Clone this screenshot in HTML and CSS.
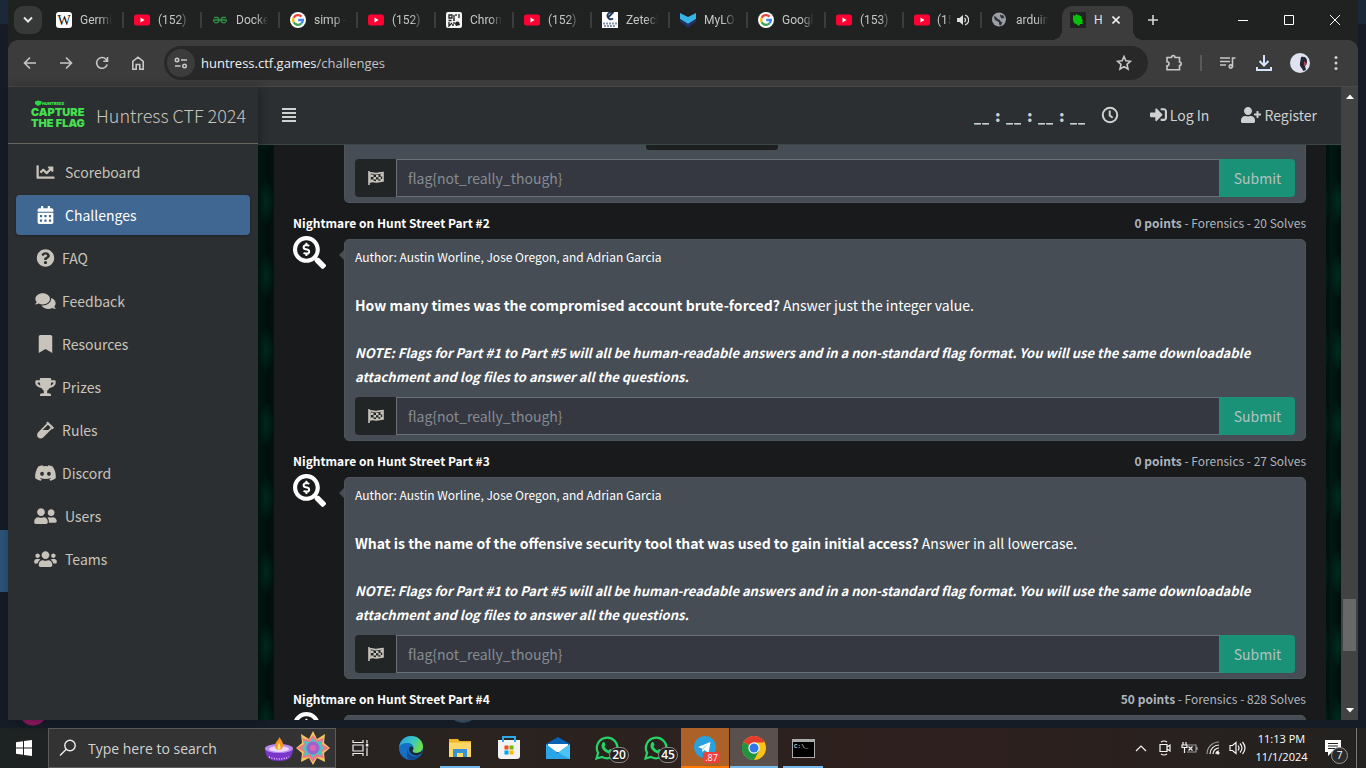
FILE: index.html
```html
<!DOCTYPE html>
<html lang="en">
<head>
<meta charset="utf-8">
<title>Huntress CTF 2024</title>
<link rel="stylesheet" href="styles.css">
</head>
<body>
<svg class="sprite" aria-hidden="true">
  <symbol id="youtube" viewBox="0 0 16 16"><rect y="2.500" width="16" height="11" rx="2.500" fill="#ff0033"/><path d="M6.500 5.600v4.800L10.500 8z" fill="#fff"/></symbol>
  <symbol id="google" viewBox="0 0 16 16"><circle cx="8" cy="8" r="8" fill="#fff"/><g fill="none" stroke-width="2.300"><path d="M11.500 4.600A4.900 4.900 0 0 0 3.700 5.700" stroke="#ea4335"/><path d="M3.700 5.700a4.900 4.900 0 0 0 0 4.600" stroke="#fbbc05"/><path d="M3.700 10.300a4.900 4.900 0 0 0 7.600 1.200" stroke="#34a853"/><path d="M11.300 11.500A4.900 4.900 0 0 0 12.900 8H8.200" stroke="#4285f4"/></g></symbol>
  <symbol id="flag" viewBox="0 0 16 14"><path d="M1 0v14M2 2c3-1 4 1 7 0.600 2.500-.4 3.500-1 6-1v8.400c-3 0-4 1.200-6.500 1-2.500-.2-3.500-1-6.500 0z" fill="none" stroke="currentColor" stroke-width="1.600"/><path d="M3 3.500h2.500V6H3zM8 4h2.500v2.200H8zM12.500 3H15v2.500h-2.500zM5.500 6H8v2.400H5.500zM10.500 6h2.300v2.200h-2.300zM3 8.400h2.500v2H3zM8 8.400h2.500v2.400H8zM12.500 8H15v2h-2.500z" fill="currentColor"/></symbol>
  <symbol id="whatsapp" viewBox="0 0 24 24"><path d="M1.500 22.500l1.600-5.600A10.300 10.300 0 1 1 7 20.900z" fill="none" stroke="#25d366" stroke-width="2.200"/><path d="M8 6.300c.5-.5 1.300-.4 1.600.3l.8 1.900c.2.500 0 .9-.9 1.900 1 2 2.300 3.200 4.300 4 .9-1.300 1.300-1.500 1.800-1.200l2 1c.5.300.4 1.200-.1 2-1 1.400-2.700 1.700-5 .8C9 15.600 7.300 13.200 6.600 11 6.200 9 6.900 7.200 8 6.300z" fill="#25d366"/></symbol>
  <symbol id="search-dollar" viewBox="0 0 512 512"><path fill="currentColor" d="M505.040 442.660l-99.710-99.690c-4.500-4.500-10.600-7-17-7h-16.300c27.600-35.300 44-79.690 44-127.990C416.030 93.090 322.920 0 208.020 0S0 93.090 0 207.980s93.110 207.980 208.020 207.980c48.300 0 92.710-16.400 128.010-44v16.300c0 6.400 2.500 12.500 7 17l99.710 99.690c9.400 9.400 24.600 9.400 33.900 0l28.300-28.300c9.400-9.400 9.400-24.590.1-33.990zm-297.020-90.700c-79.540 0-144-64.340-144-143.980 0-79.530 64.350-143.980 144-143.980 79.540 0 144 64.340 144 143.980 0 79.530-64.350 143.980-144 143.980zm27.110-152.540l-45.010-13.500c-5.160-1.550-8.770-6.780-8.770-12.730 0-7.270 5.300-13.190 11.800-13.190h28.100c4.560 0 8.960 1.290 12.820 3.720 3.240 2.030 7.360 1.910 10.130-.73l11.750-11.210c3.530-3.370 3.330-9.210-.57-12.140-9.100-6.830-20.080-10.770-31.370-11.350V112c0-4.420-3.580-8-8-8h-16c-4.420 0-8 3.580-8 8v16.120c-23.630.63-42.680 20.550-42.680 45.070 0 19.970 12.990 37.810 31.580 43.390l45.010 13.500c5.160 1.550 8.770 6.780 8.770 12.730 0 7.270-5.300 13.190-11.800 13.190h-28.100c-4.560 0-8.960-1.290-12.820-3.720-3.240-2.030-7.360-1.910-10.130.73l-11.750 11.210c-3.530 3.370-3.330 9.210.57 12.140 9.100 6.830 20.080 10.770 31.370 11.350V304c0 4.420 3.580 8 8 8h16c4.420 0 8-3.580 8-8v-16.120c23.630-.63 42.680-20.540 42.680-45.070 0-19.970-12.990-37.810-31.590-43.390z"/></symbol>
</svg>

<div class="desktop">
<div class="window">
  <header class="tabstrip">
    <button class="tab-search" aria-label="Search tabs"><svg width="12" height="8" viewBox="0 0 12 8"><path d="M2 1.500l4 4 4-4" fill="none" stroke="#e3e3e3" stroke-width="2"/></svg></button>
    <nav class="tabs" aria-label="Tabs">
      <a class="tab" href="#"><svg class="fav" viewBox="0 0 16 16"><rect width="16" height="16" rx="3" fill="#fff"/><text x="8" y="13" text-anchor="middle" font-family="Liberation Serif, serif" font-size="14" fill="#111">W</text></svg><span>Germi</span></a>
      <a class="tab" href="#"><svg class="fav"><use href="#youtube"/></svg><span>(152) I</span></a>
      <a class="tab" href="#"><svg class="fav" viewBox="0 0 16 16"><path d="M1 8h14M2 5.500h3.500a2.800 2.800 0 1 1-4 3M14 5.500h-3.500a2.800 2.800 0 1 0 4 3" fill="none" stroke="#2f8d46" stroke-width="1.400"/></svg><span>Docke</span></a>
      <a class="tab" href="#"><svg class="fav"><use href="#google"/></svg><span>simp -</span></a>
      <a class="tab" href="#"><svg class="fav"><use href="#youtube"/></svg><span>(152) I</span></a>
      <a class="tab" href="#"><svg class="fav" viewBox="0 0 16 16"><rect width="16" height="16" rx="2" fill="#f4f4f4"/><path d="M3 3h3v3H3zM10 2v2M13 2v4M8 3v4M2.500 8.500h3M7 8h2M3 10v4l3-3M6 13h2M8 10v2" fill="none" stroke="#222" stroke-width="1.300"/><path d="M9 12a2.500 2.500 0 0 1 4-2l1 3-4 1z" fill="#222"/></svg><span>Chrom</span></a>
      <a class="tab" href="#"><svg class="fav"><use href="#youtube"/></svg><span>(152) T</span></a>
      <a class="tab" href="#"><svg class="fav" viewBox="0 0 16 16"><path d="M0 0h16v16H0z" fill="#fff"/><path d="M11 1a3.400 3.400 0 1 0 0 5.500M6 5.500L11.500 0" fill="none" stroke="#1d3557" stroke-width="1.800"/><path d="M1 11.500h14M2 14h12" stroke="#8295ad" stroke-width="1.800" stroke-dasharray="2 1"/></svg><span>Zetech</span></a>
      <a class="tab" href="#"><svg class="fav" viewBox="0 0 16 16"><path d="M0 1l8 4 8-4v6l-8 5-8-5z" fill="#36b5e6"/><path d="M0 7l8 5 8-5v2.500L8 15.500 0 9.500z" fill="#20336b"/></svg><span>MyLO</span></a>
      <a class="tab" href="#"><svg class="fav"><use href="#google"/></svg><span>Googl</span></a>
      <a class="tab" href="#"><svg class="fav"><use href="#youtube"/></svg><span>(153) C</span></a>
      <a class="tab audible" href="#"><svg class="fav"><use href="#youtube"/></svg><span>(15</span><svg class="audio" viewBox="0 0 12 12"><path d="M0 4h2.500L6 1v10L2.500 8H0z" fill="#ddd"/><path d="M7.500 4a2.500 2.500 0 0 1 0 4M8 1.200a5 5 0 0 1 0 9.600" fill="none" stroke="#ddd" stroke-width="1.300"/></svg></a>
      <a class="tab last" href="#"><svg class="fav" viewBox="0 0 16 16"><circle cx="7" cy="7.500" r="7" fill="#9aa0a6"/><path d="M2 4c2 0 3 3 5 3.500s1 3 3.500 2.500L9 13.500c-3 0-1-3-3-4S2 8 2 4zM8 1.500c0 2 2 2 3 1.500l1.500 3-3 .5L8 4" fill="#303336"/></svg><span>arduin</span></a>
      <a class="tab active" href="#" aria-current="page"><svg class="fav" viewBox="0 0 16 16"><path d="M0 0h16v16H0z" fill="#222"/><path d="M3 3l2 1 1-2 2 1 3 1 1 3 1 2-1 1 1 2-3 0-1 2-3-2-2-1-1-3z" fill="#04c30a"/></svg><span>H</span><svg class="tab-close" viewBox="0 0 8 8"><path d="M0.500.5l7 7M7.500.5l-7 7" stroke="#eee" stroke-width="1.600"/></svg></a>
    </nav>
    <button class="tool new-tab" aria-label="New tab"><svg width="10" height="10"><path d="M5 0v10M0 5h10" stroke="#d5d7d6" stroke-width="1.600"/></svg></button>
    <div class="window-buttons">
      <button aria-label="Minimize"><svg width="10" height="10"><path d="M0 5.500h10" stroke="#fff"/></svg></button>
      <button aria-label="Maximize"><svg width="10" height="10"><path d="M.5.5h9v9h-9z" stroke="#fff" fill="none"/></svg></button>
      <button aria-label="Close"><svg width="10" height="10"><path d="M0 0l10 10M10 0L0 10" stroke="#fff"/></svg></button>
    </div>
  </header>

  <div class="toolbar">
    <button class="tool" aria-label="Back"><svg width="14" height="14"><path d="M13 7H2M7 1.500L1.500 7 7 12.500"/></svg></button>
    <button class="tool" aria-label="Forward"><svg width="14" height="14"><path d="M1 7h11M7 1.500L12.500 7 7 12.500"/></svg></button>
    <button class="tool" aria-label="Reload"><svg width="14" height="14"><path d="M12.200 8.500A5.400 5.400 0 1 1 11 3.200L12.500 5M12.500 1v4.300H8.300"/></svg></button>
    <button class="tool" aria-label="Home"><svg width="14" height="14"><path d="M1.800 13.200V5.500L7 1.200l5.200 4.300v7.700H8.800V8.500H5.200v4.700z"/></svg></button>
    <div class="omnibox">
      <button class="site-info" aria-label="Site information"><svg width="14" height="14"><path d="M7 4h6M1 10h5.500"/><circle cx="3" cy="4" r="1.700"/><circle cx="10.500" cy="10" r="1.700"/></svg></button>
      <a class="url" href="#">huntress.ctf.games<span>/challenges</span></a>
      <button class="tool star" aria-label="Bookmark"><svg width="16" height="16"><path d="M8 1.500l1.900 4.300 4.600.5-3.500 3.100 1 4.600L8 11.600 4 14l1-4.600L1.500 6.300l4.600-.5z"/></svg></button>
    </div>
    <button class="tool" aria-label="Extensions"><svg width="18" height="18"><path d="M2 3.500h4.500c0-2.500 3.500-2.500 3.500 0h4.500V8c2.300 0 2.300 3.500 0 3.500v4.200H2v-4c2.700 0 2.700-4 0-4z"/></svg></button>
    <span class="divider"></span>
    <button class="tool" aria-label="Media"><svg width="16" height="14"><path d="M0 2h10M0 5.500h10M0 9h6M12.500 11V2h3"/><circle cx="10.800" cy="10.500" r="1.600"/></svg></button>
    <button class="tool download" aria-label="Downloads"><svg width="18" height="18"><path d="M9 1v10M4.500 7L9 11.500 13.500 7M2 13v3h14v-3" stroke-width="2"/></svg></button>
    <button class="tool" aria-label="Profile"><svg width="20" height="20"><circle cx="10" cy="10" r="10" fill="#dfe3f0" stroke="none"/><path d="M11 4c4-1 6 1 6 4 0 3-1 4-2 5l1 4-3 1c0-3-4-4-3-8z" fill="#252733" stroke="none"/><path d="M14 8l3 3-3 2z" fill="#b34050" stroke="none"/></svg></button>
    <button class="tool" aria-label="Menu"><svg width="4" height="14"><g fill="#d0d0d0" stroke="none"><circle cx="2" cy="1.600" r="1.500"/><circle cx="2" cy="7" r="1.500"/><circle cx="2" cy="12.400" r="1.500"/></g></svg></button>
  </div>

  <div class="page">
    <aside class="sidebar">
      <a class="brand" href="#">
        <svg class="logo" width="58" height="32" viewBox="0 0 58 32" aria-hidden="true"><path d="M5 2.500l3-1 4 1-1 3-3 1.500-3-2z" fill="#27d845"/><g fill="#43e04f" font-family="Inter, sans-serif" font-weight="900"><text x="12" y="6" font-size="4">HUNTRESS</text><text x="1" y="17" font-size="11">CAPTURE</text><text x="1" y="28" font-size="11">THE FLAG</text></g></svg>
        <span>Huntress CTF 2024</span>
      </a>
      <nav class="menu" aria-label="Main">
        <a href="#"><svg viewBox="0 0 512 512"><path d="M496 384H64V80c0-8.840-7.160-16-16-16H16C7.160 64 0 71.160 0 80v336c0 17.670 14.330 32 32 32h464c8.840 0 16-7.160 16-16v-32c0-8.840-7.160-16-16-16zM464 96H345.940c-21.380 0-32.090 25.850-16.970 40.970l32.400 32.400L288 242.750l-73.370-73.370c-12.500-12.500-32.760-12.500-45.250 0l-68.690 68.690c-6.250 6.250-6.250 16.380 0 22.630l22.620 22.620c6.250 6.250 16.380 6.250 22.630 0L192 237.250l73.370 73.370c12.500 12.500 32.760 12.500 45.250 0l96-96 32.400 32.400c15.120 15.120 40.970 4.410 40.970-16.970V112c.01-8.840-7.150-16-15.990-16z"/></svg><span class="wide">Scoreboard</span></a>
        <a href="#" class="current" aria-current="page"><svg viewBox="0 0 448 512"><path d="M0 464c0 26.500 21.500 48 48 48h352c26.500 0 48-21.500 48-48V192H0v272zm320-196c0-6.600 5.400-12 12-12h40c6.600 0 12 5.400 12 12v40c0 6.600-5.400 12-12 12h-40c-6.600 0-12-5.400-12-12v-40zm0 128c0-6.600 5.400-12 12-12h40c6.600 0 12 5.400 12 12v40c0 6.600-5.400 12-12 12h-40c-6.600 0-12-5.400-12-12v-40zM192 268c0-6.600 5.400-12 12-12h40c6.600 0 12 5.400 12 12v40c0 6.600-5.400 12-12 12h-40c-6.600 0-12-5.400-12-12v-40zm0 128c0-6.600 5.400-12 12-12h40c6.600 0 12 5.400 12 12v40c0 6.600-5.400 12-12 12h-40c-6.600 0-12-5.400-12-12v-40zM64 268c0-6.600 5.400-12 12-12h40c6.600 0 12 5.400 12 12v40c0 6.600-5.400 12-12 12H76c-6.600 0-12-5.400-12-12v-40zm0 128c0-6.600 5.400-12 12-12h40c6.600 0 12 5.400 12 12v40c0 6.600-5.400 12-12 12H76c-6.600 0-12-5.400-12-12v-40zM400 64h-48V16c0-8.800-7.200-16-16-16h-32c-8.800 0-16 7.200-16 16v48H160V16c0-8.800-7.200-16-16-16h-32c-8.800 0-16 7.200-16 16v48H48C21.500 64 0 85.500 0 112v48h448v-48c0-26.500-21.500-48-48-48z"/></svg><span class="wide">Challenges</span></a>
        <a href="#"><svg viewBox="0 0 512 512"><path d="M504 256c0 136.997-111.043 248-248 248S8 392.997 8 256C8 119.083 119.043 8 256 8s248 111.083 248 248zM262.655 90c-54.497 0-89.255 22.957-116.549 63.758-3.536 5.286-2.353 12.415 2.715 16.258l34.699 26.310c5.205 3.947 12.621 3.008 16.665-2.122 17.864-22.658 30.113-35.797 57.303-35.797 20.429 0 45.698 13.148 45.698 32.958 0 14.976-12.363 22.667-32.534 33.976C247.128 238.528 216 254.941 216 296v4c0 6.627 5.373 12 12 12h56c6.627 0 12-5.373 12-12v-1.333c0-28.462 83.186-29.647 83.186-106.667 0-58.002-60.165-102-116.531-102zM256 338c-25.365 0-46 20.635-46 46 0 25.364 20.635 46 46 46s46-20.636 46-46c0-25.365-20.635-46-46-46z"/></svg><span>FAQ</span></a>
        <a href="#"><svg viewBox="0 0 576 512"><path d="M416 192c0-88.400-93.100-160-208-160S0 103.600 0 192c0 34.300 14.100 65.900 38 92-13.400 30.200-35.500 54.200-35.800 54.500-2.200 2.300-2.800 5.700-1.500 8.700S4.800 352 8 352c36.600 0 66.900-12.300 88.700-25 32.200 15.700 70.300 25 111.300 25 114.900 0 208-71.600 208-160zm122 220c23.900-26 38-57.700 38-92 0-66.900-53.500-124.200-129.300-148.100.9 6.600 1.300 13.300 1.300 20.100 0 105.900-107.700 192-240 192-10.800 0-21.300-.8-31.700-1.900C207.800 439.600 281.800 480 368 480c41 0 79.100-9.200 111.300-25 21.800 12.700 52.100 25 88.700 25 3.200 0 6.100-1.900 7.300-4.800 1.300-2.900.7-6.300-1.500-8.700-.3-.3-22.400-24.200-35.800-54.500z"/></svg><span>Feedback</span></a>
        <a href="#"><svg viewBox="0 0 384 512"><path d="M0 512V48C0 21.490 21.490 0 48 0h288c26.510 0 48 21.490 48 48v464L192 400 0 512z"/></svg><span>Resources</span></a>
        <a href="#"><svg viewBox="0 0 576 512"><path d="M552 64H448V24c0-13.300-10.700-24-24-24H152c-13.300 0-24 10.700-24 24v40H24C10.700 64 0 74.700 0 88v56c0 35.700 22.500 72.400 61.900 100.700 31.500 22.700 69.800 37.100 110 41.700C203.300 338.500 240 360 240 360v72h-48c-35.300 0-64 20.700-64 56v12c0 6.600 5.400 12 12 12h296c6.600 0 12-5.400 12-12v-12c0-35.300-28.700-56-64-56h-48v-72s36.700-21.500 68.100-73.600c40.300-4.600 78.600-19 110-41.700 39.300-28.300 61.900-65 61.900-100.700V88c0-13.300-10.700-24-24-24zM99.300 192.800C74.900 175.200 64 155.600 64 144v-16h64.200c1 32.600 5.800 61.200 12.800 86.200-15.100-5.200-29.200-12.400-41.700-21.400zM512 144c0 16.100-17.700 36.100-35.300 48.800-12.500 9-26.700 16.200-41.800 21.400 7-25 11.800-53.600 12.800-86.200H512v16z"/></svg><span>Prizes</span></a>
        <a href="#"><svg viewBox="0 0 480 512"><path d="M477.700 186.100L309.500 18.300c-3.100-3.100-8.200-3.100-11.300 0l-34 33.900c-3.100 3.100-3.100 8.200 0 11.300l11.200 11.100L33 316.500c-38.800 38.700-45.100 102-9.400 143.500 20.600 24 49.500 36 78.400 35.900 26.400 0 52.800-10 72.900-30.100l246.300-245.700 11.200 11.100c3.100 3.100 8.200 3.100 11.300 0l34-33.900c3.100-3 3.100-8.100 0-11.200zM318 256H161l148-147.700 78.500 78.300L318 256z"/></svg><span>Rules</span></a>
        <a href="#"><svg viewBox="28 0 584 512"><path d="M524.531 69.836a1.500 1.500 0 0 0-.764-.7A485.065 485.065 0 0 0 404.081 32.030a1.816 1.816 0 0 0-1.923.91 337.461 337.461 0 0 0-14.900 30.600 447.848 447.848 0 0 0-134.426 0 309.541 309.541 0 0 0-15.135-30.600 1.890 1.890 0 0 0-1.924-.91A483.689 483.689 0 0 0 116.085 69.137a1.712 1.712 0 0 0-.788.676C39.068 183.651 18.186 294.690 28.430 404.354a2.016 2.016 0 0 0 .765 1.375A487.666 487.666 0 0 0 176.020 479.918a1.900 1.900 0 0 0 2.063-.676A348.200 348.200 0 0 0 208.120 430.400a1.860 1.860 0 0 0-1.019-2.588 321.173 321.173 0 0 1-45.868-21.853 1.885 1.885 0 0 1-.185-3.126c3.082-2.309 6.166-4.711 9.109-7.137a1.819 1.819 0 0 1 1.900-.256c96.229 43.917 200.410 43.917 295.500 0a1.812 1.812 0 0 1 1.924.233c2.944 2.426 6.027 4.851 9.132 7.160a1.884 1.884 0 0 1-.162 3.126 301.407 301.407 0 0 1-45.890 21.830 1.875 1.875 0 0 0-1 2.611 391.055 391.055 0 0 0 30.014 48.815 1.864 1.864 0 0 0 2.063.7A486.048 486.048 0 0 0 610.700 405.729a1.882 1.882 0 0 0 .765-1.352C623.729 277.594 590.933 167.465 524.531 69.836ZM222.491 337.580c-28.972 0-52.844-26.587-52.844-59.239S193.056 219.100 222.491 219.100c29.665 0 53.306 26.820 52.843 59.239C275.334 310.993 251.924 337.580 222.491 337.580Zm195.380 0c-28.971 0-52.843-26.587-52.843-59.239S388.437 219.100 417.871 219.100c29.667 0 53.307 26.820 52.844 59.239C470.715 310.993 447.538 337.580 417.871 337.580Z"/></svg><span>Discord</span></a>
        <a href="#"><svg viewBox="0 0 640 512"><path d="M192 256c61.900 0 112-50.100 112-112S253.900 32 192 32 80 82.100 80 144s50.100 112 112 112zm76.800 32h-8.300c-20.800 10-43.900 16-68.500 16s-47.600-6-68.500-16h-8.300C51.600 288 0 339.600 0 403.200V432c0 26.500 21.500 48 48 48h288c26.500 0 48-21.500 48-48v-28.800c0-63.600-51.600-115.200-115.200-115.200zM480 256c53 0 96-43 96-96s-43-96-96-96-96 43-96 96 43 96 96 96zm48 32h-3.800c-13.900 4.800-28.600 8-44.200 8s-30.300-3.200-44.200-8H432c-20.400 0-39.200 5.900-55.700 15.400 24.400 26.300 39.700 61.200 39.700 99.800v38.400c0 2.200-.5 4.300-.6 6.400H592c26.500 0 48-21.500 48-48 0-61.900-50.100-112-112-112z"/></svg><span class="wide">Users</span></a>
        <a href="#"><svg viewBox="0 0 640 512"><path d="M96 224c35.300 0 64-28.700 64-64s-28.700-64-64-64-64 28.700-64 64 28.700 64 64 64zm448 0c35.300 0 64-28.700 64-64s-28.700-64-64-64-64 28.700-64 64 28.700 64 64 64zm32 32h-64c-17.600 0-33.500 7.100-45.100 18.600 40.300 22.100 68.900 62 75.100 109.400h66c17.700 0 32-14.300 32-32v-32c0-35.300-28.700-64-64-64zm-256 0c61.900 0 112-50.100 112-112S381.900 32 320 32 208 82.100 208 144s50.100 112 112 112zm76.800 32h-8.300c-20.800 10-43.900 16-68.500 16s-47.600-6-68.500-16h-8.300C179.600 288 128 339.600 128 403.200V432c0 26.500 21.500 48 48 48h288c26.500 0 48-21.500 48-48v-28.800c0-63.600-51.600-115.200-115.200-115.200zm-223.700-13.400C161.500 263.100 145.600 256 128 256H64c-35.300 0-64 28.700-64 64v32c0 17.700 14.300 32 32 32h65.900c6.300-47.400 34.900-87.300 75.200-109.400z"/></svg><span class="wide">Teams</span></a>
      </nav>
    </aside>

    <div class="main">
      <header class="navbar">
        <button class="burger" aria-label="Toggle menu"><svg width="14" height="14"><path d="M0 1h14M0 5h14M0 9h14M0 13h14" stroke="#d0d2d0" stroke-width="2"/></svg></button>
        <div class="countdown"><i>_</i><i>_</i><b>:</b><i>_</i><i>_</i><b>:</b><i>_</i><i>_</i><b>:</b><i>_</i><i>_</i></div>
        <a class="clock" href="#" aria-label="Time remaining"><svg width="18" height="18"><g fill="none" stroke="#cfd1d0" stroke-width="2"><circle cx="9" cy="9" r="7.200"/><path d="M8.700 4.500v5l3 2.200"/></g></svg></a>
        <a class="login" href="#"><svg width="17" height="17" viewBox="0 0 512 512"><path d="M416 448h-84c-6.600 0-12-5.400-12-12v-40c0-6.600 5.400-12 12-12h84c17.700 0 32-14.300 32-32V160c0-17.700-14.300-32-32-32h-84c-6.600 0-12-5.400-12-12V76c0-6.600 5.400-12 12-12h84c53 0 96 43 96 96v192c0 53-43 96-96 96zm-47-201L201 79c-15-15-41-4.500-41 17v96H24c-13.300 0-24 10.700-24 24v96c0 13.300 10.700 24 24 24h136v96c0 21.500 26 32 41 17l168-168c9.300-9.400 9.300-24.600 0-34z"/></svg>Log In</a>
        <a class="register" href="#"><svg width="20" height="16" viewBox="0 0 640 512"><path d="M624 208h-64v-64c0-8.800-7.200-16-16-16h-32c-8.800 0-16 7.200-16 16v64h-64c-8.800 0-16 7.200-16 16v32c0 8.800 7.200 16 16 16h64v64c0 8.800 7.200 16 16 16h32c8.800 0 16-7.200 16-16v-64h64c8.800 0 16-7.200 16-16v-32c0-8.800-7.200-16-16-16zm-400 48c70.700 0 128-57.300 128-128S294.700 0 224 0 96 57.300 96 128s57.300 128 128 128zm89.600 32h-16.700c-22.200 10.200-46.900 16-72.900 16s-50.600-5.800-72.900-16h-16.700C60.200 288 0 348.200 0 422.400V464c0 26.500 21.500 48 48 48h352c26.500 0 48-21.500 48-48v-41.600c0-74.200-60.200-134.400-134.400-134.400z"/></svg>Register</a>
      </header>

      <div class="matrix">
        <main class="challenges">
          <article class="challenge">
            <div class="card continued">
              <div class="attachment"></div>
              <form class="answer"><label for="flag1"><svg width="16" height="14" aria-label="Flag"><use href="#flag"/></svg></label><input id="flag1" type="text" placeholder="flag{not_really_though}"><button type="button">Submit</button></form>
            </div>
          </article>
          <article class="challenge">
            <header><h2>Nightmare on Hunt Street Part #2</h2><p><b>0 points</b> - Forensics - 20 Solves</p></header>
            <svg class="badge"><use href="#search-dollar"/></svg>
            <div class="card pointed">
              <p class="author">Author: Austin Worline, Jose Oregon, and Adrian Garcia</p>
              <p><b>How many times was the compromised account brute-forced?</b> Answer just the integer value.</p>
              <p class="note">NOTE: Flags for Part #1 to Part #5 will all be human-readable answers and in a non-standard flag format. You will use the same downloadable attachment and log files to answer all the questions.</p>
              <form class="answer"><label for="flag2"><svg width="16" height="14" aria-label="Flag"><use href="#flag"/></svg></label><input id="flag2" type="text" placeholder="flag{not_really_though}"><button type="button">Submit</button></form>
            </div>
          </article>
          <article class="challenge">
            <header><h2>Nightmare on Hunt Street Part #3</h2><p><b>0 points</b> - Forensics - 27 Solves</p></header>
            <svg class="badge"><use href="#search-dollar"/></svg>
            <div class="card pointed">
              <p class="author">Author: Austin Worline, Jose Oregon, and Adrian Garcia</p>
              <p><b>What is the name of the offensive security tool that was used to gain initial access?</b> Answer in all lowercase.</p>
              <p class="note">NOTE: Flags for Part #1 to Part #5 will all be human-readable answers and in a non-standard flag format. You will use the same downloadable attachment and log files to answer all the questions.</p>
              <form class="answer"><label for="flag3"><svg width="16" height="14" aria-label="Flag"><use href="#flag"/></svg></label><input id="flag3" type="text" placeholder="flag{not_really_though}"><button type="button">Submit</button></form>
            </div>
          </article>
          <article class="challenge">
            <header><h2>Nightmare on Hunt Street Part #4</h2><p><b>50 points</b> - Forensics - 828 Solves</p></header>
            <svg class="badge"><use href="#search-dollar"/></svg>
            <div class="card"></div>
          </article>
        </main>
      </div>
    </div>

    <div class="scrollbar" aria-hidden="true">
      <svg width="8" height="5"><path d="M0 5l4-4.500L8 5z" fill="#fff"/></svg>
      <div class="track"><span class="before"></span><span class="thumb"></span><span class="after"></span></div>
      <svg width="8" height="5"><path d="M0 0l4 4.500L8 0z" fill="#fff"/></svg>
    </div>
  </div>
</div>

<footer class="taskbar">
  <button class="start" aria-label="Start"><svg width="16" height="16"><path d="M0 2.300L7 1.300v6.300H0zM8 1.100L16 0v7.600H8zM0 8.400h7v6.300l-7-1zM8 8.400h8V16l-8-1.100z" fill="#fff"/></svg></button>
  <div class="search">
    <label for="search"><svg width="18" height="18" aria-label="Search"><g fill="none" stroke="#eee" stroke-width="1.400"><circle cx="11" cy="6.500" r="5.200"/><path d="M7.300 10.300L1 16.600"/></g></svg></label>
    <input id="search" type="text" placeholder="Type here to search">
    <svg class="festive" width="66" height="34" viewBox="0 0 66 34">
      <path d="M1 17c0 10 5 13 14 13s14-3 14-13z" fill="#7a35c9"/><ellipse cx="15" cy="17.500" rx="14" ry="4.500" fill="#b98af2"/><ellipse cx="15" cy="18" rx="10" ry="3" fill="#f0d6ff"/><path d="M5 26q10 4 20 0" stroke="#f1c3ff" stroke-dasharray="1 1.500" fill="none" stroke-width="1.500"/><path d="M15 6c5 5 6 12 0 13-6-1-4-7-2-9 1-1 2-2 2-4z" fill="#f7941e"/><path d="M15 12c2 3 2 6 0 7-2-1-2-4 0-7z" fill="#ffe27a"/>
      <path d="M49 0l4 8 8-5-1 9 6 5-6 5 1 9-8-4-4 7-4-7-8 4 1-9-6-5 6-5-1-9 8 5z" fill="#f3c75c"/><path d="M49 4l4 5 7-2-2 6 7 4-7 4 2 6-7-1-4 5-4-5-7 1 2-6-7-4 7-4-2-6 7 2z" fill="#f0788c"/><path d="M49 7l3 4 6-1-1 5 3 2-3 3 1 5-6-2-3 4-3-4-6 2 1-5-3-3 3-2-1-5 6 1z" fill="#46c6c0"/><circle cx="49" cy="17" r="6.500" fill="#9e62cf"/><circle cx="49" cy="17" r="3" fill="#d967b4"/>
    </svg>
  </div>
  <button class="app taskview" aria-label="Task View"><svg width="17" height="16"><g fill="none" stroke="#eee" stroke-width="1.200"><path d="M1 0v2.500h10V0M1 5h10v6H1zM1 16v-2.500h10V16"/><path d="M15 0v3.500M15 7.500V16"/></g><path d="M13.800 4h2.500v2.500h-2.500z" fill="#eee"/></svg></button>
  <div class="apps">
    <button class="app" aria-label="Edge"><svg width="24" height="24"><defs><linearGradient id="edgeTop" x1="0" y1="0" x2="1" y2=".4"><stop offset="0" stop-color="#2a9ae0"/><stop offset=".6" stop-color="#38c7c0"/><stop offset="1" stop-color="#6fdc4c"/></linearGradient></defs><circle cx="12" cy="12" r="12" fill="#1370c4"/><path d="M.2 11C1 4.500 6 0 12 0c7 0 12 5 12 10.500 0 4-3 6.500-7 6.500-2.500 0-3.500-1-3.500-2 0-.8 1-1.200 1-3C14.500 9 12 7 8.500 7 4.500 7 1.500 8.500.2 11z" fill="url(#edgeTop)"/><path d="M8.500 13c0 5 5 8 9 7.500 2-.2 3.500-1 4.500-2C20 22 16.500 24 12 24 6 24 8.500 17 8.500 13z" fill="#164a94"/><path d="M14.500 12c0 1.800-1 2.200-1 3s1 2 3.500 2c3 0 5.500-1.200 6.500-3-.5 3-3 5.500-6 5.500-4 0-7.500-3-7.500-6.500 0-2.500 2-3.500 4.500-1z" fill="#1b2a36"/></svg></button>
    <button class="app running" aria-label="File Explorer"><svg width="22" height="20"><path d="M0 1h9l1.500 2H22v16H0z" fill="#f0b429"/><path d="M0 4.500h22V19H0z" fill="#ffd767"/><path d="M4 19v-8h14v8h-4v-4H8v4z" fill="#3793d9"/></svg></button>
    <button class="app" aria-label="Store"><svg width="24" height="24"><path d="M1 4h22v16a3 3 0 0 1-3 3H4a3 3 0 0 1-3-3z" fill="#f2f2f2"/><path d="M6 6V1h12v5" fill="none" stroke="#2fa8e8" stroke-width="2"/><path d="M7.500 9.500h4v4h-4z" fill="#f04e1f"/><path d="M12.500 9.500h4v4h-4z" fill="#7ab800"/><path d="M7.500 14.500h4v4h-4z" fill="#00a3ee"/><path d="M12.500 14.500h4v4h-4z" fill="#ffb800"/></svg></button>
    <button class="app" aria-label="Mail"><svg width="24" height="24"><path d="M0 8l12-7 12 7v4H0z" fill="#0a62b5"/><path d="M2 8h20v8H2z" fill="#fff"/><path d="M0 8l12 9L24 8v15H0z" fill="#2aa4ea"/><path d="M24 8v15L10 15.500l2 1z" fill="#4bc3f5"/></svg></button>
    <button class="app" aria-label="WhatsApp"><svg width="24" height="24"><use href="#whatsapp"/></svg><span class="count">20</span></button>
    <button class="app" aria-label="WhatsApp"><svg width="24" height="24"><use href="#whatsapp"/></svg><span class="count">45</span></button>
    <button class="app alert" aria-label="Telegram"><svg width="22" height="22"><circle cx="11" cy="11" r="11" fill="#2aa1dc"/><path d="M4 11l12.500-5-2 11-4-3-2 2-.5-3.500z" fill="#fff"/><path d="M8 12.500L14 8l-5 6-.5 2z" fill="#b5d5e8"/></svg><span class="unread">.87</span></button>
    <button class="app running focused" aria-label="Chrome"><svg width="24" height="24"><circle cx="12" cy="12" r="12" fill="#fbc116"/><path d="M12 12L1.600 6A12 12 0 0 1 22.400 6z" fill="#e33b2e"/><path d="M1.600 6A12 12 0 0 0 12 24l5-9z" fill="#229342"/><path d="M12 6.500h10.700L17 15z" fill="#fbc116"/><circle cx="12" cy="12" r="5.700" fill="#fff"/><circle cx="12" cy="12" r="4.500" fill="#2f78ea"/></svg></button>
    <button class="app running" aria-label="Command Prompt"><svg width="23" height="19"><path d="M0 0h23v19H0z" fill="#aaa"/><path d="M1 3h21v15H1z" fill="#000"/><text x="2" y="9" fill="#fff" font-size="6" font-family="Liberation Mono, monospace">C:\_</text></svg></button>
  </div>
  <div class="tray">
    <button aria-label="Show hidden icons"><svg width="12" height="8"><path d="M1 7l5-5 5 5"/></svg></button>
    <button aria-label="Meet Now"><svg width="14" height="16"><path d="M2 4.500h7v7H2zM9 7l3-2v6L9 9M3 2q3-2 6 0M3 14q3 2 6 0"/></svg></button>
    <button aria-label="Battery"><svg width="17" height="12"><path d="M2 0v3M5 0v3M1 3h5v2.500H1zM3.500 5.500V11"/><path d="M6 3h9v7H6M16 5v3" stroke="#999"/><path d="M7.500 4.500l4 4M11.500 4.500l-4 4"/></svg></button>
    <button aria-label="Network"><svg width="14" height="14"><path d="M1 13A12 12 0 0 1 13 1" stroke="#999"/><path d="M4 13a9 9 0 0 1 9-9M7 13a6 6 0 0 1 6-6M10 13a3 3 0 0 1 3-3"/><circle cx="12" cy="12" r="1" fill="#fff"/></svg></button>
    <button aria-label="Volume"><svg width="17" height="14"><path d="M1 4.500h2.500L7 1.500v11L3.500 9.500H1zM9 4.500q2 2.500 0 5M11 2.500q4 4.500 0 9M13.500 1q5 6 0 12"/></svg></button>
  </div>
  <time class="datetime" datetime="2024-11-01T23:13"><span>11:13 PM</span><span>11/1/2024</span></time>
  <button class="notices" aria-label="Notifications"><svg width="17" height="16"><path d="M0 0h16v12h-9l-4 4v-4H0z" fill="#fff"/><path d="M3 3.500h10M3 6h10M3 8.500h7" stroke="#222"/></svg><span class="seven">7</span></button>
</footer>
</div>
</body>
</html>
```
FILE: styles.css
```css
* { box-sizing: border-box; }
body { margin: 0; background: #151c26; color: #fff; overflow: hidden; }
h2, p { margin: 0; }
a { color: inherit; text-decoration: none; }
button { margin: 0; padding: 0; border: 0; background: none; color: inherit; font: inherit; }
.sprite { position: absolute; width: 0; height: 0; }

.desktop {
  height: 100vh;
  display: flex;
  flex-direction: column;
  font-family: "Open Sans", "Noto Sans", sans-serif;
  background:
    linear-gradient(#2b5278, #2b5278) 0 530px / 8px 62px no-repeat,
    linear-gradient(#1b2838, #1b2838) 0 0 / 100% 24px no-repeat,
    radial-gradient(circle at 33px 712px, #8b1860 0 13px, transparent 14px),
    radial-gradient(ellipse at 463px 712px, #33475a 0 13px, transparent 14px),
    #151c26;
}
.window { flex: 1; min-height: 0; margin: 0 8px 8px; display: flex; flex-direction: column; background: #202221; }

/* Tab strip */
.tabstrip { height: 40px; flex: none; display: flex; align-items: center; }
.tab-search { width: 28px; height: 28px; margin: 0 4px 0 6px; border-radius: 9px; background: #373938; display: grid; place-items: center; flex: none; }
.tabs { display: flex; align-self: stretch; padding-left: 2px; }
.tab { width: 78px; padding-left: 8px; display: flex; align-items: center; gap: 6px; font-family: Roboto, "Open Sans", sans-serif; font-size: 12px; color: #c4c7c5; position: relative; }
.tab .fav { width: 16px; height: 16px; flex: none; }
.tab span { flex: none; width: 36px; padding-left: 2px; overflow: hidden; white-space: nowrap; mask-image: linear-gradient(90deg, #000 60%, transparent 95%); }
.tab::after { content: ""; position: absolute; left: 74px; width: 2px; height: 16px; background: #3c3e3d; }
.tab.last::after { display: none; }
.tab.audible span { width: 17px; }
.audible { gap: 5px; }
.audio { width: 12px; height: 12px; }
.tab.active { width: 71px; height: 34px; align-self: flex-end; padding-bottom: 6px; background: #3c3c3c; border-radius: 10px 10px 0 0; color: #e3e3e3; }
.tab.active span { width: 14px; mask-image: none; }
.tab.active::before, .tab.active::after { content: ""; position: absolute; bottom: 0; width: 10px; height: 10px; }
.tab.active::before { left: -10px; background: radial-gradient(circle at 0 0, transparent 10px, #3c3c3c 10px); }
.tab.active::after { left: 100%; background: radial-gradient(circle at 100% 0, transparent 10px, #3c3c3c 10px); }
.tab-close { width: 8px; height: 8px; }
.window-buttons { margin-left: auto; display: flex; align-self: stretch; }
.window-buttons button { width: 46px; display: grid; place-items: center; }

/* Address bar */
.toolbar { height: 47px; flex: none; display: flex; align-items: center; padding: 0 4px; background: #3c3c3c; border-radius: 10px 10px 0 0; border-bottom: 1px solid #4a4a4a; }
.tool { width: 36px; height: 34px; flex: none; display: grid; place-items: center; }
.tool svg, .site-info svg { fill: none; stroke: #c7c7c7; stroke-width: 1.6; }
.new-tab { margin-left: 2px; }
.omnibox { flex: 1; height: 34px; margin: 0 8px; padding: 0 6px 0 3px; border-radius: 17px; background: #282828; display: flex; align-items: center; }
.site-info { width: 28px; height: 28px; border-radius: 50%; background: #3c3c3c; display: grid; place-items: center; }
.url { flex: 1; margin-left: 6px; font-size: 13px; color: #f0f0f0; }
.url span { color: #c4c4c4; }
.divider { width: 2px; height: 16px; margin: 0 8px; background: #5a5a5a; }
.download svg { stroke: #d3e3fd; }

/* Site */
.page { flex: 1; min-height: 0; display: flex; font-family: "Noto Sans CJK SC", "Noto Sans", sans-serif; font-size: 14px; line-height: 24px; }
.sidebar { width: 250px; flex: none; background: #2c2f31; color: #c8c3bb; box-shadow: 2px 0 10px rgba(0, 0, 0, .3); z-index: 1; }
.brand { height: 57px; display: flex; align-items: center; gap: 8px; padding-left: 22px; border-bottom: 1px solid #6a6762; font-size: 18px; font-weight: 300; white-space: nowrap; }
.menu { padding: 8px; display: grid; gap: 3px; }
.menu a { height: 40px; display: flex; align-items: center; padding-left: 16px; border-radius: 4px; }
.menu svg { width: 27px; height: 18px; fill: currentColor; }
.menu span { margin-left: 3px; }
.menu .wide { margin-left: 6px; }
.menu .current { background: #3f6791; color: #fff; box-shadow: 0 1px 3px rgba(0, 0, 0, .3); }

.main { flex: 1; min-width: 0; display: flex; flex-direction: column; }
.navbar { height: 58px; flex: none; display: flex; align-items: center; padding: 0 24px 2px; background: #2c2f31; border-bottom: 1px solid #3b4647; color: #cfd1d0; }
.burger { display: flex; margin-right: auto; }
.countdown { display: flex; font-size: 16px; font-weight: 700; }
.countdown i { width: 7px; margin-right: 1px; font-style: normal; overflow: hidden; }
.countdown b { width: 16px; text-align: center; }
.clock { display: flex; margin: 0 31px 0 15px; }
.login, .register { display: flex; align-items: center; gap: 3px; }
.login { margin-right: 32px; }
.navbar a svg { fill: currentColor; }

.matrix {
  flex: 1; min-height: 0; overflow: hidden; padding: 0 15px 0 16px;
  background:
    radial-gradient(ellipse 8px 24px at center, rgba(0, 62, 40, .6), transparent) 0 20px / 16px 74px,
    linear-gradient(90deg, #011a15, #000f0c 60%, #01130f) 0 0 / 16px 100%;
}
.challenges { background: #191a1b; padding: 0 20px 0 19px; }
.challenge { display: grid; grid-template-columns: 51px 1fr; }
.challenge header { grid-column: 1 / -1; height: 36px; display: flex; align-items: center; justify-content: space-between; padding-top: 4px; font-size: 12px; color: #adb5bd; }
.challenge h2 { font-size: 12px; font-weight: 700; color: #fff; }
.badge { width: 33px; height: 33px; margin-top: -3px; }
.card { grid-column: 2; position: relative; min-height: 30px; padding: 5px 10px; background: #464d54; border: 1px solid #4c555c; border-radius: 5px; }
.card p { margin-bottom: 24px; }
.card .author { font-size: 12px; }
.card .note { margin-bottom: 8px; font-size: 13px; font-weight: 700; font-style: italic; }
.pointed::before { content: ""; position: absolute; left: -6px; top: 10px; border: 5px solid transparent; border-left: 0; border-right-color: #464d54; }
.continued { padding-top: 0; border-top: 0; border-radius: 0 0 5px 5px; }
.attachment { width: 132px; height: 5px; margin: 0 0 9px 31%; background: #1c1f20; border-radius: 0 0 3px 3px; }
.answer { height: 38px; display: flex; }
.answer label { width: 41px; display: grid; place-items: center; background: #212525; border-radius: 4px 0 0 4px; color: #c8c3bb; }
.answer input { flex: 1; min-width: 0; padding: 0 11px; background: #353840; border: 1px solid #697178; border-radius: 0; font: inherit; color: #fff; }
.answer input::placeholder { color: #868c93; opacity: 1; }
.answer button { width: 75px; background: #1a9278; color: #b3c2bf; border-radius: 0 4px 4px 0; }

.scrollbar { width: 17px; flex: none; background: #424242; display: flex; flex-direction: column; align-items: center; padding: 7px 0; }
.track { flex: 1; width: 13px; display: flex; flex-direction: column; }
.before { flex: 498; }
.thumb { flex: 52; background: #686868; }
.after { flex: 57; }

/* Taskbar */
.taskbar { height: 40px; flex: none; display: flex; align-items: center; background: linear-gradient(90deg, #1d2222, #2a231f 34%, #2e201e 70%, #232220); }
.start { width: 48px; display: grid; place-items: center; }
.search { width: 288px; height: 40px; display: flex; align-items: center; padding-left: 10px; background: #333; border: 1px solid #5b5b5b; }
.search label { display: flex; margin-right: 11px; }
.search input { flex: 1; min-width: 0; padding: 0; background: none; border: 0; color: #ddd; font: inherit; font-size: 14px; }
.search input::placeholder { color: #d2d2d2; opacity: 1; }
.festive { margin-right: 5px; }
.app { position: relative; width: 48px; height: 40px; display: grid; place-items: center; }
.apps { display: flex; gap: 1px; margin-left: 3px; }
.running::after { content: ""; position: absolute; left: 4px; right: 4px; bottom: 0; height: 2px; background: #76b9ed; }
.focused { background: #5a504d; }
.focused::after { left: 0; right: 0; }
.alert { background: #ac6128; border-bottom: 2px solid #ff7800; }
.count { position: absolute; right: 2px; bottom: 5px; width: 20px; height: 16px; border: 1px solid #888; border-radius: 8px; background: #27211f; font-size: 12px; line-height: 14px; font-weight: 600; }
.unread { position: absolute; left: 22px; bottom: 3px; width: 17px; height: 11px; border-radius: 3px; background: #ee3f3c; font-size: 9px; line-height: 11px; }
.tray { display: flex; align-items: center; margin-left: auto; }
.tray button { width: 24px; display: grid; place-items: center; }
.tray svg { fill: none; stroke: #f4f4f4; stroke-width: 1.2; }
.datetime { width: 57px; display: grid; justify-items: center; margin-left: 4px; font-size: 11px; line-height: 18px; white-space: nowrap; }
.notices { position: relative; width: 40px; height: 40px; margin: 0 9px 0 7px; display: grid; align-items: center; padding-left: 8px; border-right: 1px solid #777; }
.seven { position: absolute; left: 14px; bottom: 4px; width: 17px; height: 17px; border: 1px solid #999; border-radius: 50%; background: #2b2b2b; font-size: 10px; line-height: 15px; }
```
